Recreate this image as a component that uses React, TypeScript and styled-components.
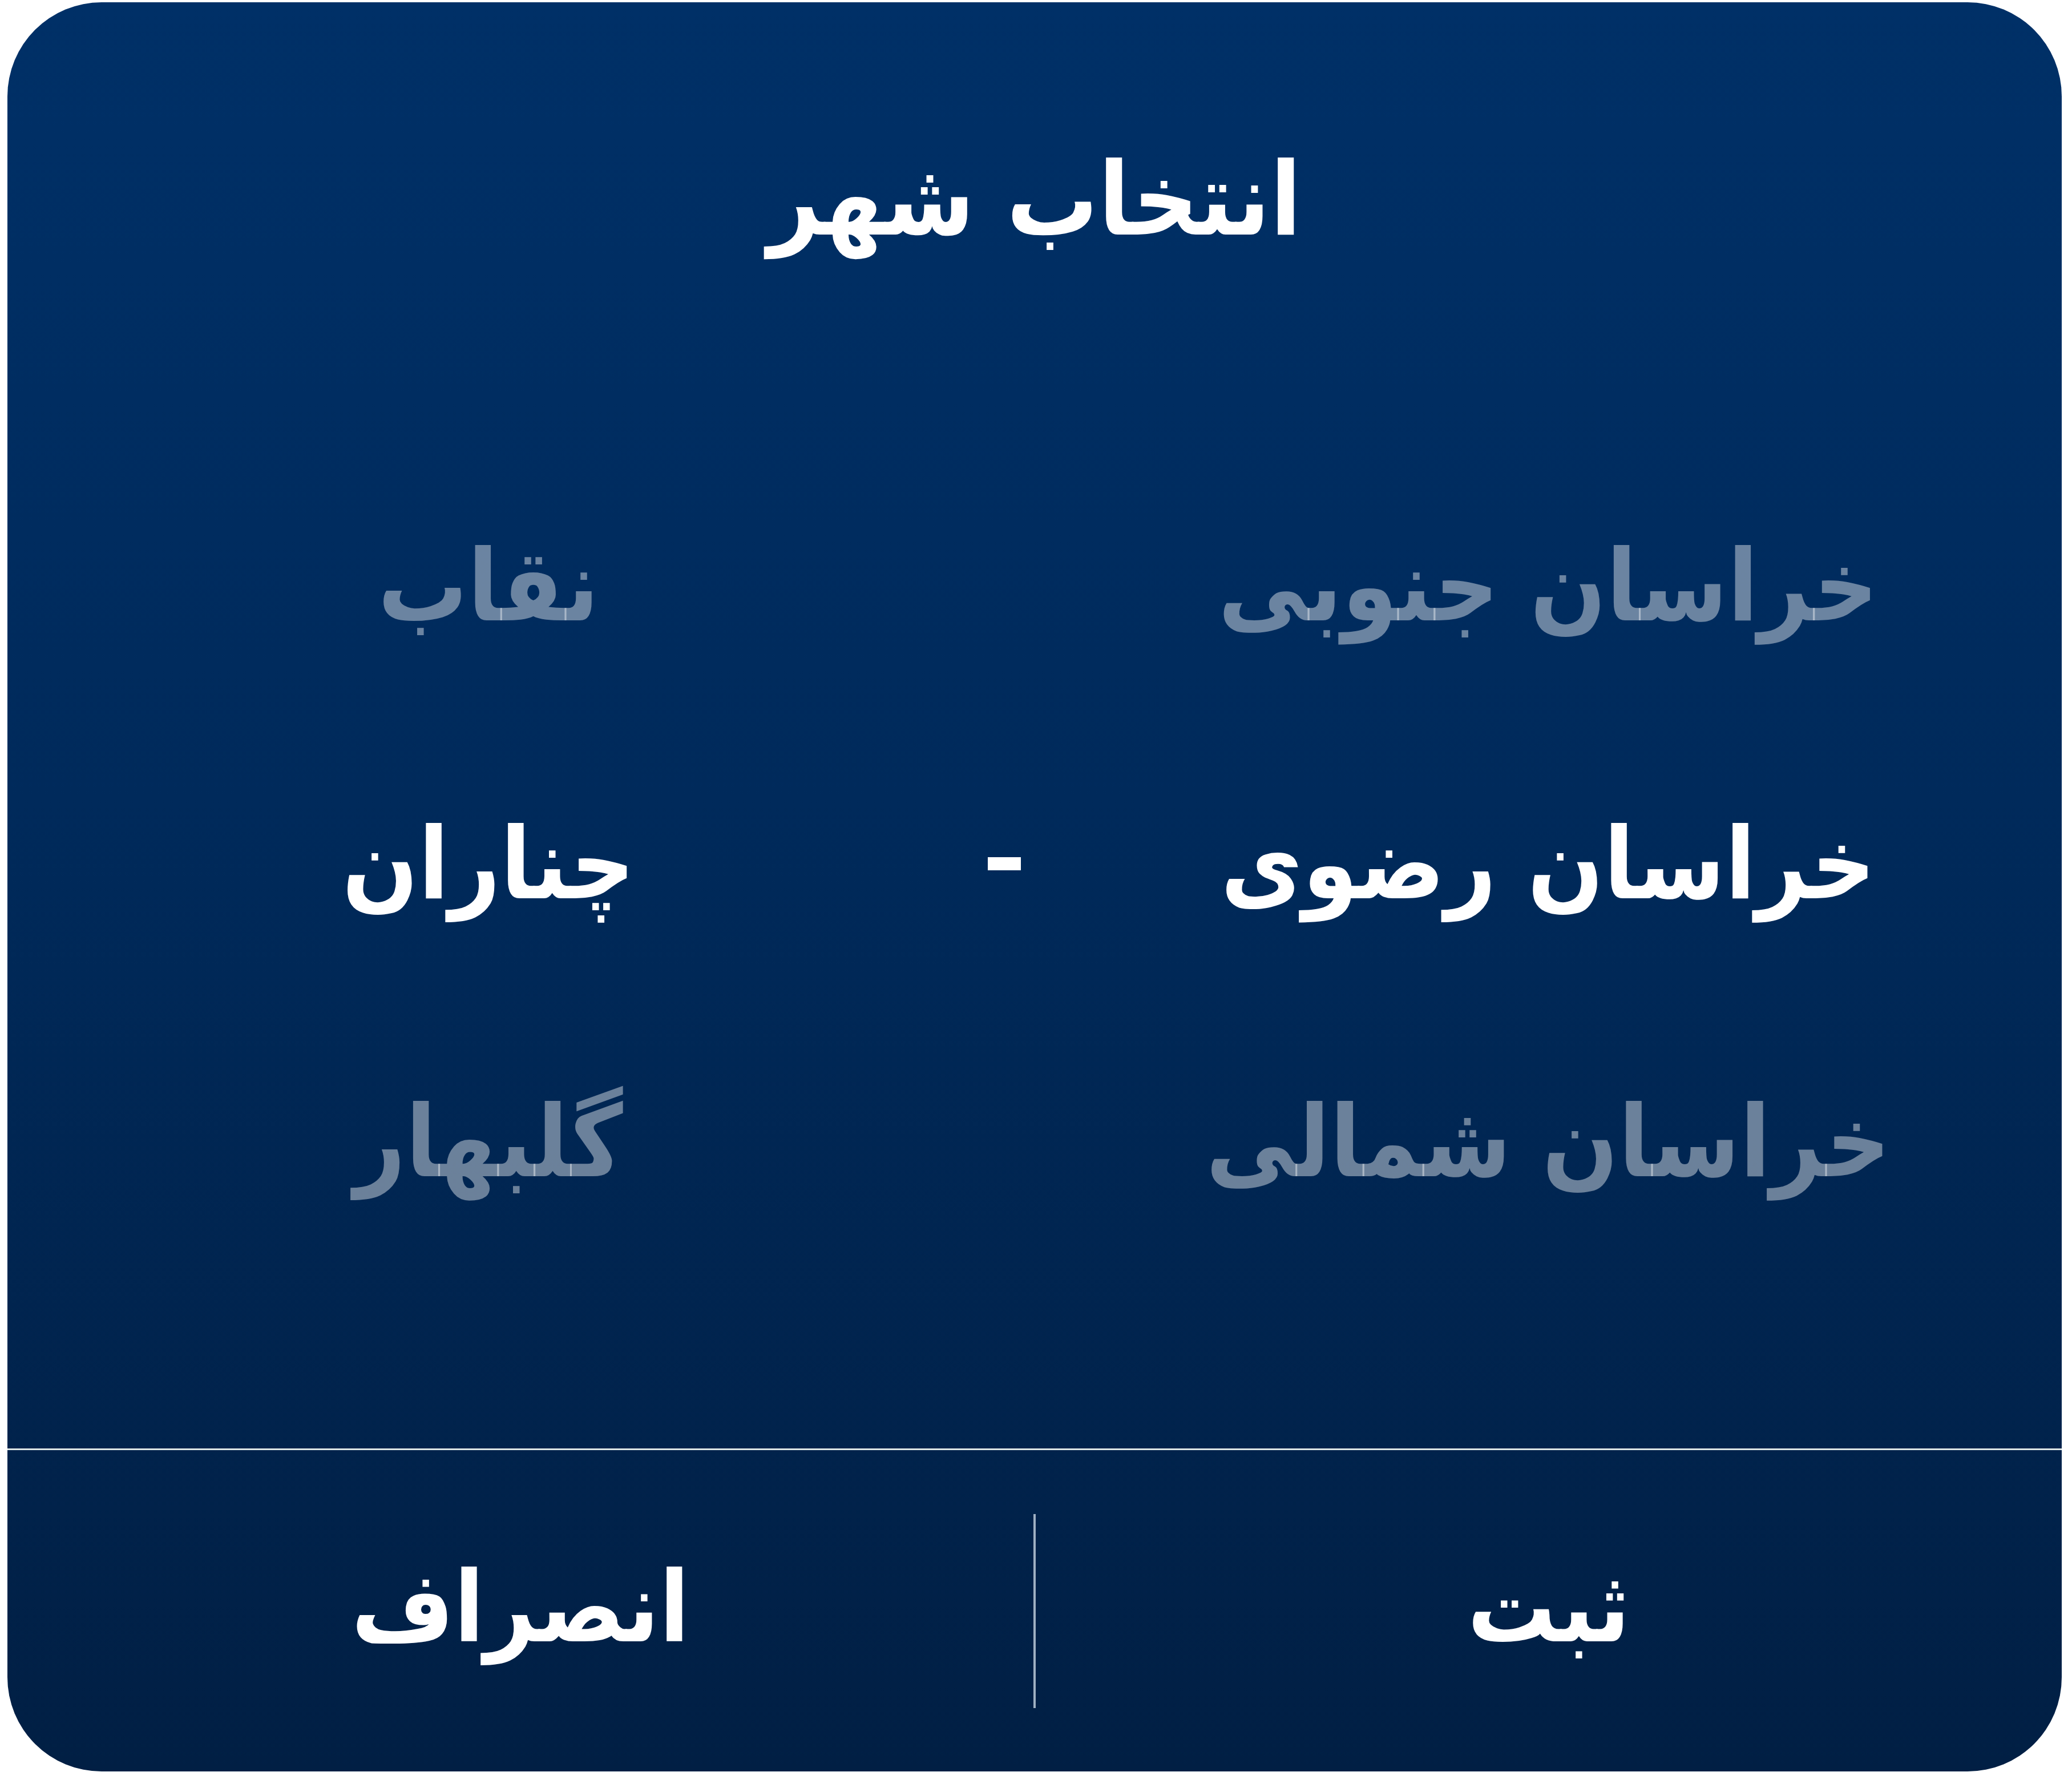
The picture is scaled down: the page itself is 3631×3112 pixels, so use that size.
import React from "react";
import styled, { createGlobalStyle } from "styled-components";

const GlobalStyle = createGlobalStyle`
  html, body {
    margin: 0;
    padding: 0;
    background: #ffffff;
  }
  * { box-sizing: border-box; }
`;

const Page = styled.div`
  width: 3631px;
  height: 3112px;
  padding: 4px 18px 8px 13px;
  background: #ffffff;
`;

const Card = styled.div`
  width: 3600px;
  height: 3100px;
  border-radius: 165px;
  overflow: hidden;
  background: linear-gradient(180deg, #003067 0%, #002a5b 45%, #011f44 100%);
  display: flex;
  flex-direction: column;
  direction: rtl;
  font-family: "DejaVu Sans Condensed", "DejaVu Sans", sans-serif;
  font-stretch: condensed;
  font-weight: 700;
  color: #ffffff;
`;

const Header = styled.div`
  padding-top: 238px;
  display: flex;
  justify-content: center;
`;

const Title = styled.h1`
  margin: 0;
  font-size: 178px;
  line-height: 216px;
  font-weight: 700;
  color: #ffffff;
`;

const Picker = styled.div`
  margin-top: 325px;
  padding: 0 95px 0 87px;
  display: grid;
  grid-template-columns: 1610px 296px 1512px;
  grid-auto-rows: 487px;
  flex: 1;
  align-content: start;
`;

const Option = styled.div<{ $active?: boolean }>`
  display: flex;
  align-items: center;
  justify-content: center;
  font-size: 174px;
  line-height: 1;
  white-space: nowrap;
  color: ${(p) => (p.$active ? "#ffffff" : "rgba(255, 255, 255, 0.42)")};
`;

const Dash = styled.div`
  display: flex;
  align-items: center;
  justify-content: center;
`;

const DashMark = styled.span`
  display: block;
  width: 58px;
  height: 23px;
  background: #ffffff;
`;

const Rule = styled.div`
  height: 3px;
  background: #dde5e4;
  flex-shrink: 0;
`;

const Footer = styled.div`
  height: 563px;
  flex-shrink: 0;
  display: flex;
  align-items: center;
`;

const ActionButton = styled.button`
  flex: 1;
  height: 100%;
  border: none;
  background: transparent;
  color: #ffffff;
  font-family: inherit;
  font-stretch: inherit;
  font-weight: 700;
  font-size: 172px;
  cursor: pointer;
  padding: 0 0 12px 0;
`;

const VSep = styled.div`
  width: 4px;
  height: 340px;
  background: #9fb0c2;
  flex-shrink: 0;
`;

const rows = [
  { province: "خراسان جنوبی", city: "نقاب", active: false },
  { province: "خراسان رضوی", city: "چناران", active: true },
  { province: "خراسان شمالی", city: "گلبهار", active: false },
];

export default function App() {
  return (
    <>
      <GlobalStyle />
      <Page>
        <Card>
          <Header>
            <Title>انتخاب شهر</Title>
          </Header>
          <Picker>
            {rows.map((r) => (
              <React.Fragment key={r.province}>
                <Option $active={r.active}>{r.province}</Option>
                <Dash>{r.active ? <DashMark /> : null}</Dash>
                <Option $active={r.active}>{r.city}</Option>
              </React.Fragment>
            ))}
          </Picker>
          <Rule />
          <Footer>
            <ActionButton>ثبت</ActionButton>
            <VSep />
            <ActionButton>انصراف</ActionButton>
          </Footer>
        </Card>
      </Page>
    </>
  );
}
